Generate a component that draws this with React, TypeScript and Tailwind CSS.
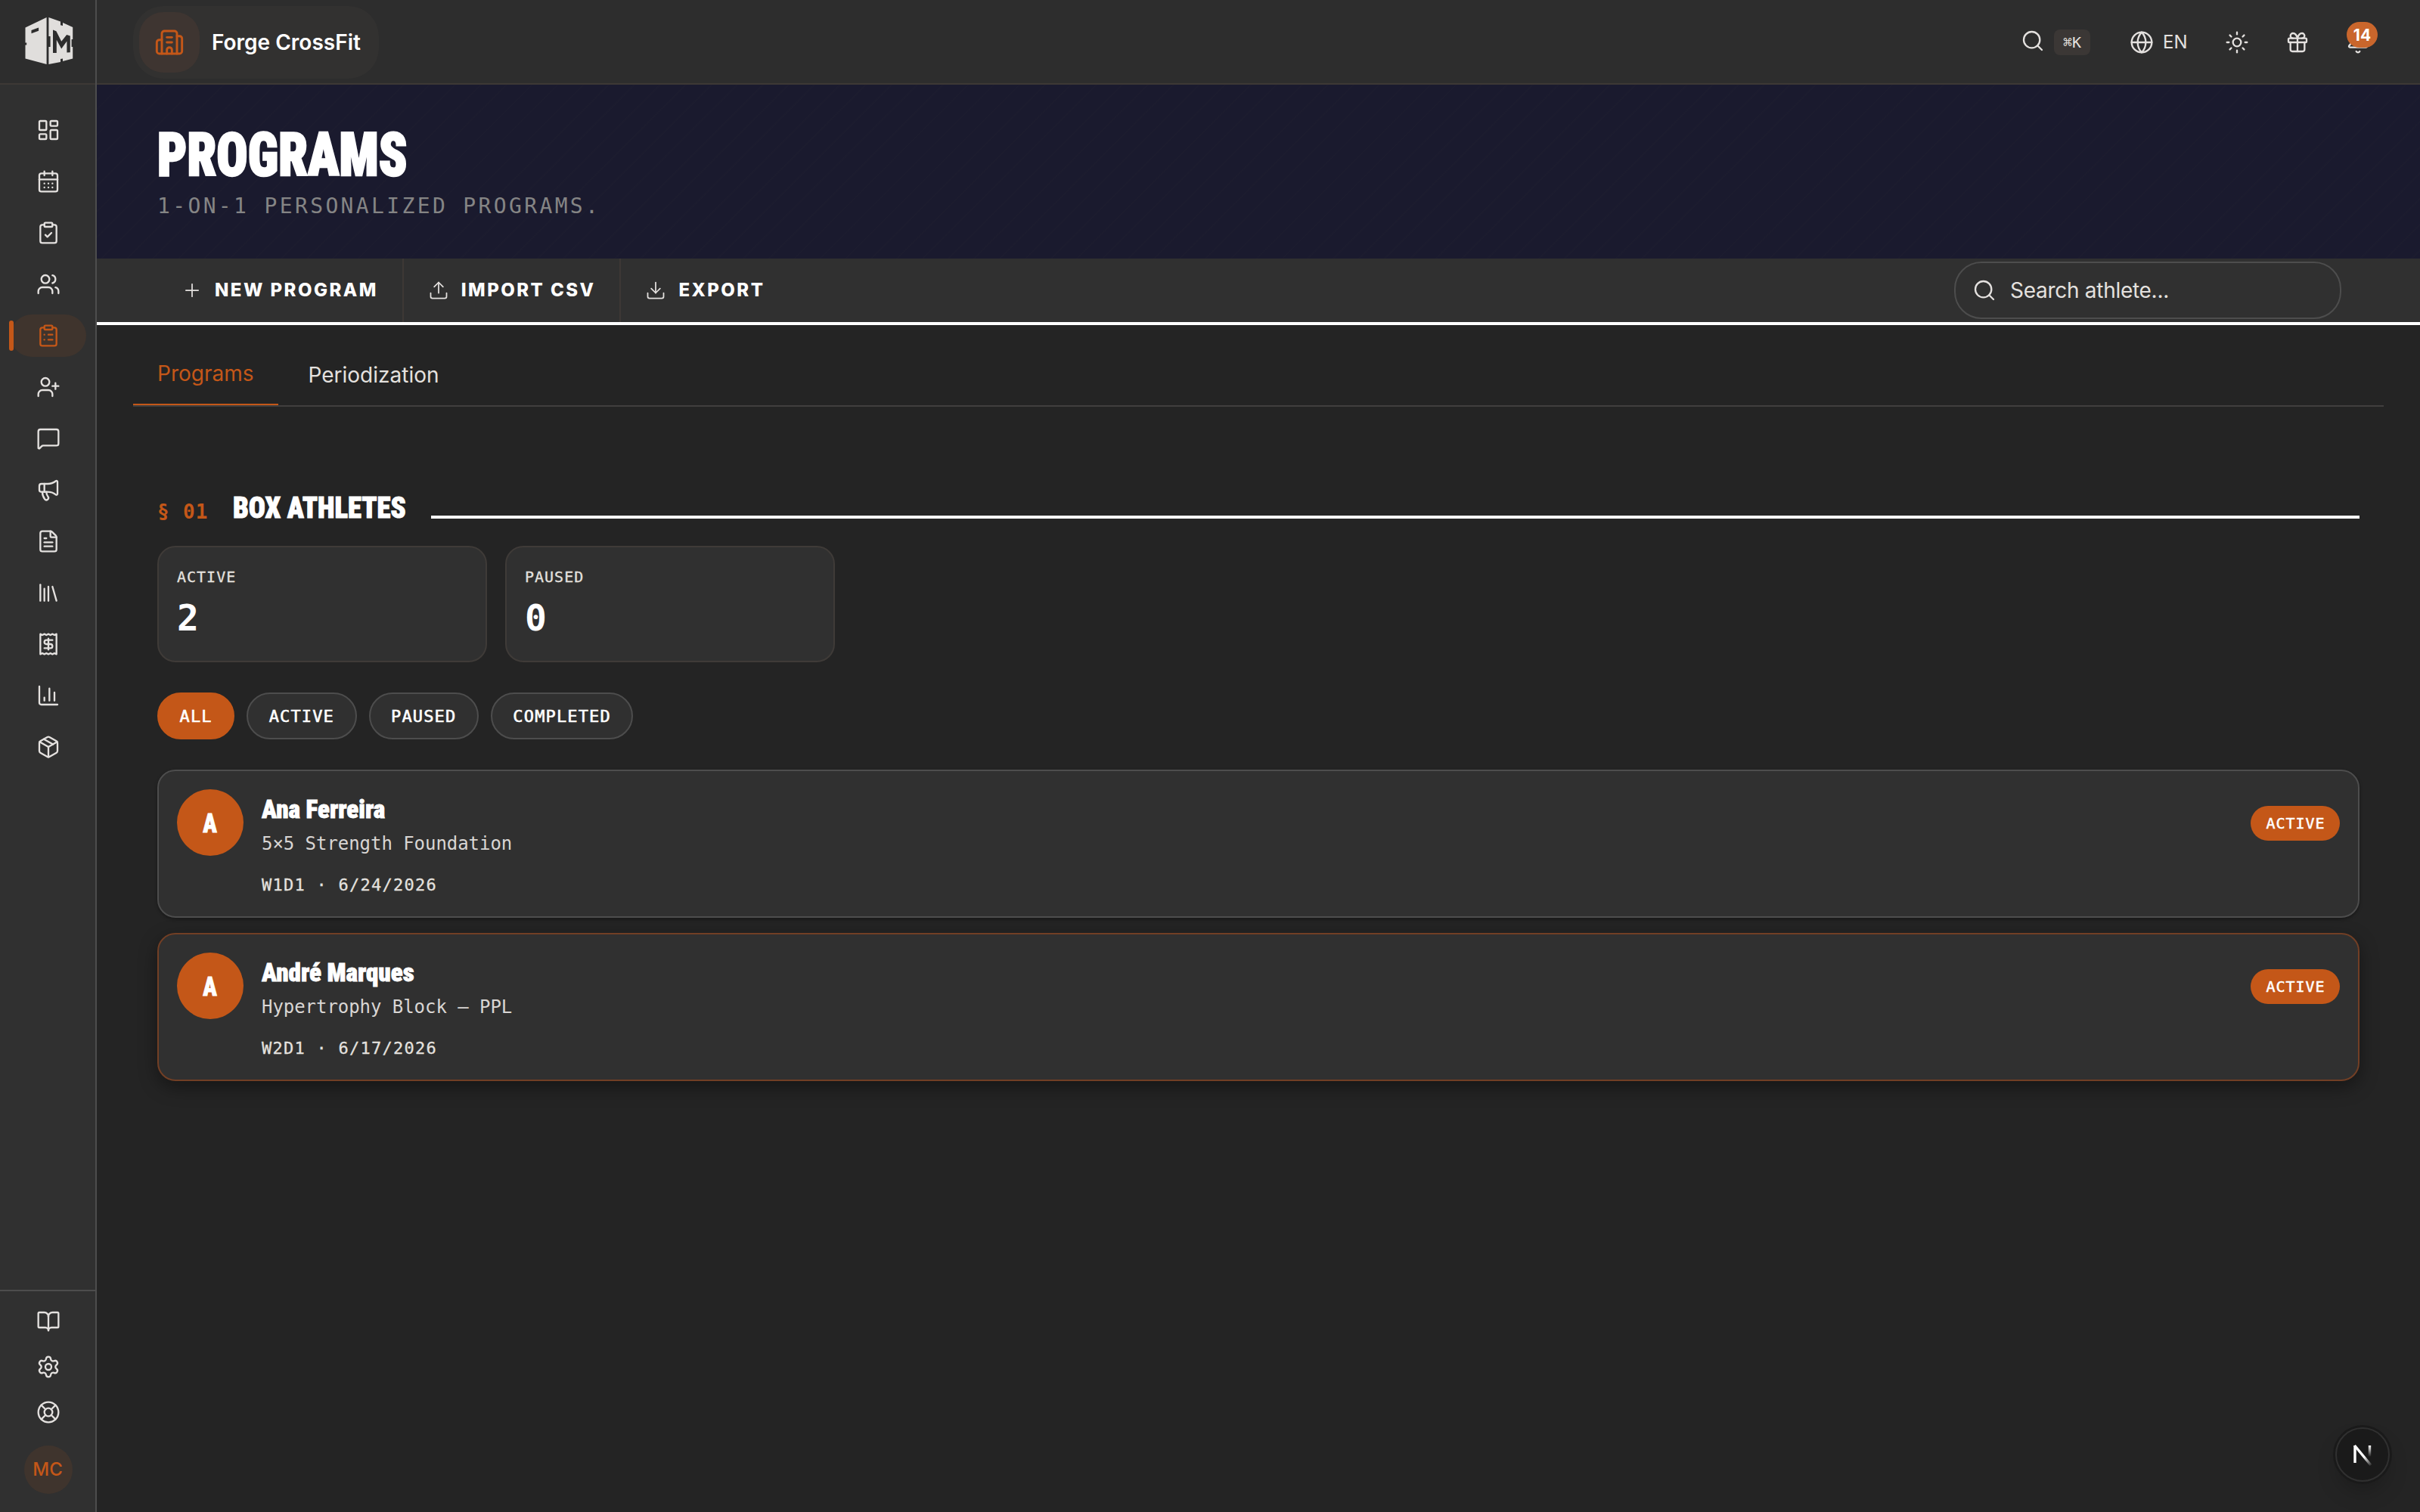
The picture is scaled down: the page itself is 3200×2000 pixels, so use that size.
import React, { useMemo, useState } from 'react';
import type { LucideIcon } from 'lucide-react';
import {
    Bell, BookOpen, Building2, CalendarDays, ClipboardCheck, ClipboardList, Download, FileText,
    Gift, Globe, LayoutDashboard, Library, LifeBuoy, Megaphone, MessageSquare, Package, Plus,
    Search, Settings, Sun, Upload, UserPlus, Users,
} from 'lucide-react';

type Status = 'active' | 'paused' | 'completed';

interface Athlete {
    id: string;
    name: string;
    program: string;
    position: string;
    date: string;
    status: Status;
}

const MONO = "font-['DejaVu_Sans_Mono',monospace]";
const DISPLAY = "font-['Roboto',sans-serif] font-black [font-stretch:75%]";

const ATHLETES: Athlete[] = [
    { id: 'ana', name: 'Ana Ferreira', program: '5×5 Strength Foundation', position: 'W1D1', date: '6/24/2026', status: 'active' },
    { id: 'andre', name: 'André Marques', program: 'Hypertrophy Block — PPL', position: 'W2D1', date: '6/17/2026', status: 'active' },
];

const FILTERS = ['all', 'active', 'paused', 'completed'] as const;

interface IconProps {
    className?: string;
    strokeWidth?: number;
}

const ReceiptIcon: React.FC<IconProps> = ({ className, strokeWidth }) => (
    <svg viewBox="0 0 24 24" fill="none" stroke="currentColor" strokeWidth={strokeWidth} strokeLinecap="round" strokeLinejoin="round" className={className}>
        <path d="M4 2v20l2-1 2 1 2-1 2 1 2-1 2 1 2-1 2 1V2l-2 1-2-1-2 1-2-1-2 1-2-1-2 1Z" />
        <path d="M16 8h-6a2 2 0 1 0 0 4h4a2 2 0 1 1 0 4H8" />
        <path d="M12 17.5v-11" />
    </svg>
);

const ChartIcon: React.FC<IconProps> = ({ className, strokeWidth }) => (
    <svg viewBox="0 0 24 24" fill="none" stroke="currentColor" strokeWidth={strokeWidth} strokeLinecap="round" strokeLinejoin="round" className={className}>
        <path d="M3 3v16a2 2 0 0 0 2 2h16" />
        <path d="M18 17V9" />
        <path d="M13 17V5" />
        <path d="M8 17v-3" />
    </svg>
);

const NAV: { id: string; icon: LucideIcon | React.FC<IconProps> }[] = [
    { id: 'dashboard', icon: LayoutDashboard },
    { id: 'calendar', icon: CalendarDays },
    { id: 'workouts', icon: ClipboardCheck },
    { id: 'members', icon: Users },
    { id: 'programs', icon: ClipboardList },
    { id: 'leads', icon: UserPlus },
    { id: 'messages', icon: MessageSquare },
    { id: 'campaigns', icon: Megaphone },
    { id: 'documents', icon: FileText },
    { id: 'library', icon: Library },
    { id: 'billing', icon: ReceiptIcon },
    { id: 'reports', icon: ChartIcon },
    { id: 'inventory', icon: Package },
];

const Logo = () => (
    <svg viewBox="0 0 66 64" className="h-16 w-[66px]" fill="#e0dedc">
        <path fillRule="evenodd" d="M1.5 14.5 29.6 1v62L1.5 55.5V37.5h1.7v-3H1.5ZM9.5 18v4.2l9.6-3.4v-4.3Z" />
        <path d="M32.4 1 48 6.6v4.6l3 .8V8l13.2 6v16h-1.6v10h1.6v15.5L51 59v-3.6l-3 .6v4L32.4 63V40h2.2V26h-2.2Z" />
        <path d="M38 48V17.5l4.4 1.7 6.8 13.6 7-8.8 4.6 1.6v21.6l-4.4.4V32.5l-7.2 10-6.4-11.8V48Z" fill="#2d2d2d" />
    </svg>
);

const Sidebar: React.FC<{ active: string; onSelect: (id: string) => void }> = ({ active, onSelect }) => (
    <aside className="flex w-32 shrink-0 flex-col border-r-2 border-[#4d4d4d] bg-[#303030] text-[#e4e1df]">
        <div className="flex h-28 shrink-0 items-center border-b-2 border-[#3d3835] bg-[#2d2d2d] pb-0.5 pl-8">
            <Logo />
        </div>
        <nav className="flex flex-1 flex-col gap-3 pt-8 pl-3.5 pr-3">
            {NAV.map(({ id, icon: Icon }) => (
                <button
                    key={id}
                    onClick={() => onSelect(id)}
                    className={`relative flex h-14 shrink-0 items-center justify-center rounded-full ${id === active ? 'bg-[#c45718]/10 text-[#c45718]' : ''}`}
                >
                    {id === active && <span className="absolute -left-0.5 h-10 w-1.5 rounded-full bg-[#c45718]" />}
                    <Icon className="size-8" strokeWidth={1.75} />
                </button>
            ))}
        </nav>
        <div className="flex flex-col items-center gap-1 border-t-2 border-[#4d4d4d] pt-3 pb-6 pl-0.5">
            {[BookOpen, Settings, LifeBuoy].map((Icon, i) => (
                <button key={i} className="flex size-14 items-center justify-center">
                    <Icon className="size-8" strokeWidth={1.75} />
                </button>
            ))}
            <div className="mt-3 flex size-16 items-center justify-center rounded-full bg-[#c45718]/10 pr-0.5 text-2xl font-medium text-[#c45718]">MC</div>
        </div>
    </aside>
);

const TopBar = () => (
    <header className="flex h-28 shrink-0 items-center border-b-2 border-[#3d3835] bg-[#2d2d2d] pt-0.5 pl-12 pr-[66px] text-[#e4e1df]">
        <button className="flex h-24 items-center gap-4 rounded-[40px] bg-[#323130] pl-2 pr-6">
            <span className="flex size-20 items-center justify-center rounded-[32px] bg-[#3e3531] text-[#c45718]">
                <Building2 className="size-10" strokeWidth={1.75} />
            </span>
            <span className="text-[28px] font-semibold text-white">Forge CrossFit</span>
        </button>
        <div className="ml-auto flex items-center">
            <Search className="mb-1 size-8" strokeWidth={1.75} />
            <kbd className={`${MONO} ml-3 flex h-[34px] w-12 items-center justify-center rounded-lg bg-[#3b3735] text-[20px]`}>⌘K</kbd>
            <Globe className="ml-[52px] size-8" strokeWidth={1.75} />
            <span className="ml-3 w-8 text-2xl">EN</span>
            <Sun className="ml-[50px] size-8" strokeWidth={1.75} />
            <Gift className="ml-12 size-8" strokeWidth={1.75} />
            <div className="relative ml-12">
                <Bell className="size-8" strokeWidth={1.75} />
                <span className="absolute left-px -top-[11px] flex h-[34px] w-[41px] items-center justify-center rounded-full bg-[#c9662c] pt-0.5 text-[21px] font-bold text-white">14</span>
            </div>
        </div>
    </header>
);

const Hero = () => (
    <section className="h-[230px] shrink-0 bg-[#1a1a2e] bg-[repeating-linear-gradient(135deg,transparent_0_22px,rgba(120,110,70,0.02)_22px_24px)] px-20 pt-[53px]">
        <h1 className={`${DISPLAY} w-max origin-left scale-x-[0.868] text-[79px] leading-[80px] text-white [-webkit-text-stroke:2.5px_white]`}>PROGRAMS</h1>
        <p className={`${MONO} mt-2 text-[28px] leading-10 tracking-[0.12em] text-[#858585]`}>1-ON-1 PERSONALIZED PROGRAMS.</p>
    </section>
);

const ACTIONS: { label: string; icon: LucideIcon }[] = [
    { label: 'NEW PROGRAM', icon: Plus },
    { label: 'IMPORT CSV', icon: Upload },
    { label: 'EXPORT', icon: Download },
];

const Toolbar: React.FC<{ term: string; setTerm: (value: string) => void }> = ({ term, setTerm }) => (
    <div className="flex h-[88px] shrink-0 items-stretch border-b-4 border-white bg-[#303030] pl-20 pr-[104px]">
        {ACTIONS.map(({ label, icon: Icon }, i) => (
            <button
                key={label}
                className={`flex items-center gap-4 px-8 text-2xl font-extrabold tracking-[0.102em] text-white ${i < ACTIONS.length - 1 ? 'border-r-2 border-[#3d3835]' : ''}`}
            >
                <Icon className="size-7 text-[#e4e1df]" strokeWidth={1.5} />
                {label}
            </button>
        ))}
        <label className="ml-auto flex h-[76px] w-[512px] items-center gap-[18px] self-center rounded-[36px] border-2 border-[#4d4d4d] pl-[22px] text-[#e4e1df]">
            <Search className="size-8 shrink-0" strokeWidth={1.75} />
            <input
                value={term}
                onChange={(e) => setTerm(e.target.value)}
                placeholder="Search athlete..."
                className="w-full bg-transparent text-[28px] tracking-[-0.01em] outline-none placeholder:text-[#e4e1df]"
            />
        </label>
    </div>
);

const StatCard: React.FC<{ label: string; value: number }> = ({ label, value }) => (
    <div className={`${MONO} h-[154px] w-[436px] rounded-3xl border-2 border-[#3f3b38] bg-[#303030] px-6 pt-[25px]`}>
        <div className="text-[20px] leading-7 tracking-[0.05em] text-[#e4e1df] [-webkit-text-stroke:0.3px_#e4e1df]">{label}</div>
        <div className="mt-3 text-5xl leading-14 font-bold text-white">{value}</div>
    </div>
);

const AthleteCard: React.FC<{ athlete: Athlete; selected: boolean; onSelect: () => void }> = ({ athlete, selected, onSelect }) => (
    <article
        onClick={onSelect}
        className={`flex h-[196px] items-start gap-6 rounded-3xl border-2 bg-[#303030] p-6 ${selected ? 'border-[#723f25] shadow-[0_8px_24px_rgba(0,0,0,0.4)]' : 'border-[#4d4d4d] shadow-[0_2px_4px_rgba(0,0,0,0.35)]'}`}
    >
        <div className={`${DISPLAY} flex size-[88px] shrink-0 items-center justify-center rounded-full bg-[#c45718] pt-1 text-[35px] text-white`}>
            <span className="scale-x-[0.88] [-webkit-text-stroke:0.8px_white]">{athlete.name[0]}</span>
        </div>
        <div className="flex-1 pt-[7px]">
            <h3 className={`${DISPLAY} text-[33px] leading-10 text-white [-webkit-text-stroke:0.8px_white]`}>{athlete.name}</h3>
            <p className={`${MONO} mt-[9px] text-2xl leading-8 tracking-[-0.002em] text-[#d9d6d4]`}>{athlete.program}</p>
            <p className={`${MONO} mt-[25px] text-[22px] leading-7 tracking-[0.057em] text-[#e4e1df] [-webkit-text-stroke:0.3px_#e4e1df]`}>
                {athlete.position} · {athlete.date}
            </p>
        </div>
        <span className={`${MONO} mt-[22px] flex h-[46px] w-[118px] items-center justify-center rounded-full bg-[#c45718] pl-px text-[20px] tracking-[0.05em] text-white uppercase [-webkit-text-stroke:0.5px_white]`}>
            {athlete.status}
        </span>
    </article>
);

const App: React.FC = () => {
    const [page, setPage] = useState('programs');
    const [term, setTerm] = useState('');
    const [tab, setTab] = useState('Programs');
    const [filter, setFilter] = useState<(typeof FILTERS)[number]>('all');
    const [selectedId, setSelectedId] = useState('andre');

    const visible = useMemo(() => {
        return ATHLETES.filter(a =>
            (filter === 'all' || a.status === filter) &&
            (term === '' || a.name.toLowerCase().includes(term.toLowerCase()))
        );
    }, [filter, term]);

    const countOf = (status: Status) => ATHLETES.filter(a => a.status === status).length;

    return (
        <div className="flex h-screen w-full overflow-hidden bg-[#242424] font-['Inter',sans-serif]">
            <Sidebar active={page} onSelect={setPage} />
            <main className="flex min-w-0 flex-1 flex-col">
                <TopBar />
                <Hero />
                <Toolbar term={term} setTerm={setTerm} />

                <div className="mx-12 flex h-27 shrink-0 items-end gap-2 border-b-2 border-[#413f3e]">
                    {['Programs', 'Periodization'].map(name => (
                        <button
                            key={name}
                            onClick={() => setTab(name)}
                            className={`h-21 px-8 text-[28px] ${tab === name ? 'border-b-2 border-[#c45718] pt-0.5 text-[#c45718]' : 'pt-1 text-[#e4e1df]'}`}
                        >
                            {name}
                        </button>
                    ))}
                </div>

                <div className="px-20 pt-[114px]">
                    <div className="flex h-10 items-baseline">
                        <span className={`${MONO} translate-y-px text-[26px] font-bold tracking-[0.05em] text-[#c45718]`}>§ 01</span>
                        <h2 className={`${DISPLAY} ml-8 w-[230px] origin-left scale-x-[0.94] text-[39px] leading-10 whitespace-nowrap text-white [-webkit-text-stroke:1px_white]`}>BOX ATHLETES</h2>
                        <div className="mb-1.5 ml-8 h-1 flex-1 self-end bg-white" />
                    </div>

                    <div className="mt-[30px] flex gap-6">
                        <StatCard label="ACTIVE" value={countOf('active')} />
                        <StatCard label="PAUSED" value={countOf('paused')} />
                    </div>

                    <div className="mt-10 flex gap-4">
                        {FILTERS.map(name => (
                            <button
                                key={name}
                                onClick={() => setFilter(name)}
                                className={`${MONO} h-[62px] rounded-full border-2 px-[27.5px] text-[22px] tracking-[0.052em] text-white uppercase [-webkit-text-stroke:0.6px_white] ${filter === name ? 'border-[#c45718] bg-[#c45718]' : 'border-[#4d4d4d] bg-[#303030]'}`}
                            >
                                {name}
                            </button>
                        ))}
                    </div>

                    <div className="mt-10 flex flex-col gap-5">
                        {visible.map(athlete => (
                            <AthleteCard
                                key={athlete.id}
                                athlete={athlete}
                                selected={athlete.id === selectedId}
                                onSelect={() => setSelectedId(athlete.id)}
                            />
                        ))}
                    </div>
                </div>
            </main>

            <button className="fixed right-10 bottom-10 flex size-[72px] items-center justify-center rounded-full border-2 border-[#303030] bg-[#1a1a1a] shadow-[0_0_0_3px_#1a1a1a,0_16px_32px_-8px_rgba(0,0,0,0.3)]">
                <svg viewBox="0 0 28 30" className="h-[30px] w-7" fill="none" strokeWidth="3.4">
                    <defs>
                        <linearGradient id="diag" x1="16" y1="18" x2="25" y2="29" gradientUnits="userSpaceOnUse">
                            <stop stopColor="#fff" />
                            <stop offset="1" stopColor="#fff" stopOpacity="0.1" />
                        </linearGradient>
                        <linearGradient id="stem" x1="24" y1="3" x2="24" y2="18" gradientUnits="userSpaceOnUse">
                            <stop stopColor="#fff" />
                            <stop offset="1" stopColor="#fff" stopOpacity="0" />
                        </linearGradient>
                    </defs>
                    <path d="M4 26V3" stroke="#fff" />
                    <path d="M3.5 3 25 29" stroke="url(#diag)" />
                    <path d="M23.5 3v15" stroke="url(#stem)" />
                </svg>
            </button>
        </div>
    );
};

export default App;
